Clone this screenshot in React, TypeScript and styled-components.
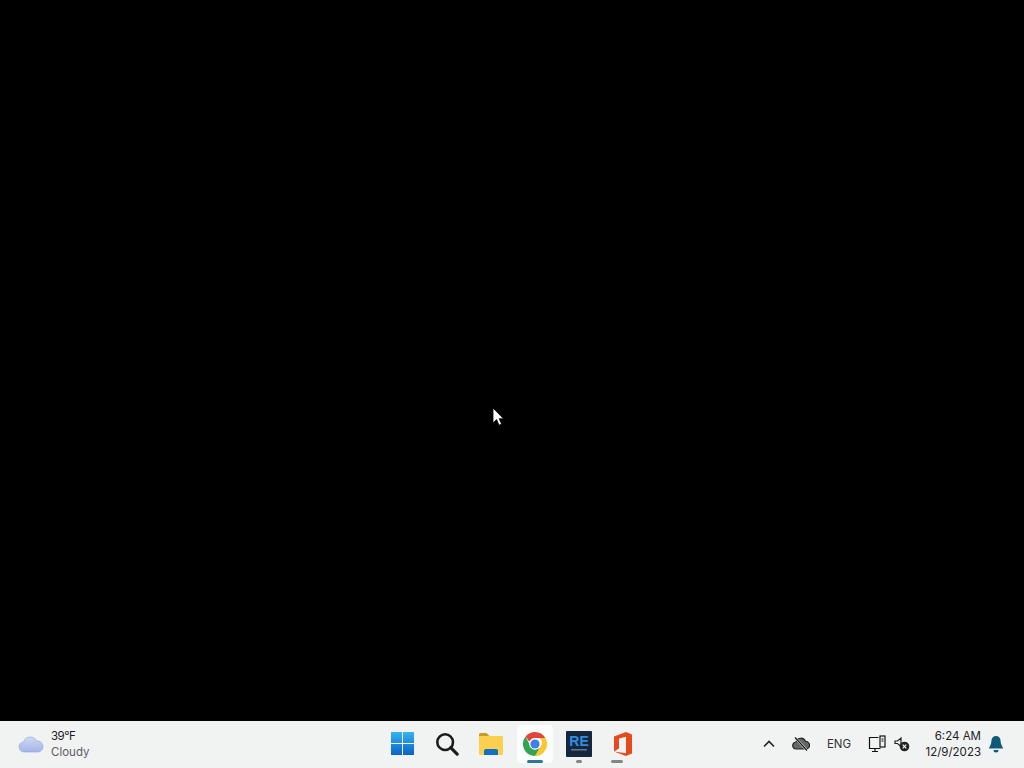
import { ReactNode } from "react";
import styled, { createGlobalStyle } from "styled-components";

const GlobalStyle = createGlobalStyle`
  html, body, #root {
    margin: 0;
    height: 100%;
  }

  body {
    font-family: "Inter", "Liberation Sans", sans-serif;
    overflow: hidden;
  }
`;

const Screen = styled.div`
  display: flex;
  flex-direction: column;
  height: 768px;
  background: #000;
`;

const Desktop = styled.div`
  flex: 1;
  position: relative;
`;

const Cursor = styled.svg`
  position: absolute;
  left: 492px;
  top: 407px;
`;

const Taskbar = styled.div`
  display: grid;
  grid-template-columns: 1fr auto 1fr;
  align-items: center;
  box-sizing: border-box;
  height: 47px;
  padding-bottom: 2px;
  background: #f1f3f3;
  color: #1a1a1a;
`;

const Weather = styled.div`
  display: flex;
  align-items: center;
  gap: 7px;
  padding-left: 18px;
  font-size: 11.5px;
  line-height: 16px;
`;

const WeatherText = styled.div`
  display: flex;
  flex-direction: column;
`;

const Temperature = styled.span`
  letter-spacing: -0.5px;
`;

const Condition = styled.span`
  color: #5c5c5c;
`;

const Apps = styled.div`
  display: flex;
  align-items: center;
  margin-left: 2px;
`;

const AppButton = styled.div<{ $active?: boolean }>`
  position: relative;
  display: flex;
  align-items: center;
  justify-content: center;
  width: ${(p) => (p.$active ? "36px" : "44px")};
  height: 38px;
  margin: ${(p) => (p.$active ? "0 4px" : "0")};
  border-radius: 4px;
  background: ${(p) => (p.$active ? "#fbfcfc" : "transparent")};
`;

const RunningMark = styled.div<{ $width: number; $shift: number; $active?: boolean }>`
  position: absolute;
  bottom: 0;
  left: calc(50% + ${(p) => p.$shift}px);
  transform: translateX(-50%);
  width: ${(p) => p.$width}px;
  height: 3px;
  border-radius: 2px;
  background: ${(p) => (p.$active ? "#2b7a94" : "#858585")};
`;

const Tray = styled.div`
  display: flex;
  align-items: center;
  justify-content: flex-end;
  padding-right: 13px;
  font-size: 11.5px;
`;

const TrayIcon = styled.div<{ $width: number }>`
  display: flex;
  align-items: center;
  justify-content: center;
  width: ${(p) => p.$width}px;
`;

const Lang = styled.span`
  width: 44px;
  margin-right: 3px;
  text-align: center;
  color: #333;
`;

const Clock = styled.div`
  display: flex;
  flex-direction: column;
  align-items: flex-end;
  width: 67px;
  line-height: 16px;
  color: #222;
`;

const StartSvg = styled.svg`
  margin-right: 2px;
`;

const StartIcon = () => (
  <StartSvg width="25" height="25" viewBox="0 0 26 26">
    <defs>
      <linearGradient id="startFill" x1="0" y1="0" x2="0" y2="1">
        <stop offset="0" stopColor="#35b4f0" />
        <stop offset="1" stopColor="#0a62c4" />
      </linearGradient>
    </defs>
    <path
      d="M1 1.500a.5.5 0 0 1 .5-.5H12.500v11.500H1zM13.500 1h11a.5.5 0 0 1 .5.5v11H13.500zM1 13.500h11.500V25H1.500a.5.5 0 0 1-.5-.5zM13.500 13.500H25v11a.5.5 0 0 1-.5.5H13.500z"
      fill="url(#startFill)"
    />
  </StartSvg>
);

const SearchIcon = () => (
  <svg width="24" height="24" viewBox="0 0 26 26" fill="none" stroke="#1c1c1c">
    <circle cx="11" cy="11" r="8.500" strokeWidth="2.800" />
    <path d="M17 17l7 7" strokeWidth="3.400" strokeLinecap="round" />
  </svg>
);

const FolderIcon = () => (
  <svg width="26" height="24" viewBox="0 0 26 24">
    <path d="M1 2.500A1.500 1.500 0 0 1 2.500 1H8.500l2.500 2.500V7H1z" fill="#c99a1e" />
    <rect x="1" y="4" width="24" height="19" rx="1" fill="#fbd04f" />
    <path d="M6 23v-4a2 2 0 0 1 2-2h10a2 2 0 0 1 2 2v4z" fill="#1270c4" />
  </svg>
);

const ChromeIcon = () => (
  <svg width="26" height="26" viewBox="0 0 26 26">
    <path d="M13 1a12 12 0 0 1 10.400 6H13a6 6 0 0 0-5.600 3.800L3.600 5.500A12 12 0 0 1 13 1z" fill="#e2463a" />
    <path d="M23.400 7A12 12 0 0 1 13 25l5.200-9a6 6 0 0 0-.5-9z" fill="#fbc62e" />
    <path d="M13 25A12 12 0 0 1 3.600 5.500L8.800 16a6 6 0 0 0 9.400 0z" fill="#33a352" />
    <circle cx="13" cy="13" r="5.800" fill="#fff" />
    <circle cx="13" cy="13" r="4.600" fill="#3f7fe8" />
  </svg>
);

const ReIcon = () => (
  <svg width="26" height="26" viewBox="0 0 26 26">
    <rect width="26" height="26" rx="1" fill="#16263c" />
    <text x="13" y="15" textAnchor="middle" fontSize="14" fontWeight="800" fontFamily="Liberation Sans, sans-serif" fill="#2f8fe0">
      RE
    </text>
    <rect x="5" y="18" width="16" height="1.500" fill="#5c7a99" />
  </svg>
);

const OfficeIcon = () => (
  <svg width="22" height="26" viewBox="0 0 22 26">
    <path d="M2 5.500L14 1l6 2.500v19L14 25 2 20.500l12 1.800V5.800L7 7.500v10l-5 3z" fill="#e8491c" />
  </svg>
);

const CloudIcon = () => (
  <svg width="26" height="20" viewBox="0 0 26 20">
    <defs>
      <linearGradient id="cloudFill" x1="0" y1="0" x2="0" y2="1">
        <stop offset="0" stopColor="#cfd9f2" />
        <stop offset="1" stopColor="#a3b5e8" />
      </linearGradient>
    </defs>
    <path
      d="M6 18a5 5 0 0 1-5-5 4.800 4.800 0 0 1 4.500-4.800A7 7 0 0 1 18.600 7 5.500 5.500 0 0 1 25 12.500 5.300 5.300 0 0 1 20 18z"
      fill="url(#cloudFill)"
      stroke="#8fa3da"
      strokeWidth="0.600"
    />
  </svg>
);

const apps: { icon: ReactNode; mark?: number; shift?: number; active?: boolean }[] = [
  { icon: <StartIcon /> },
  { icon: <SearchIcon /> },
  { icon: <FolderIcon /> },
  { icon: <ChromeIcon />, mark: 16, active: true },
  { icon: <ReIcon />, mark: 6 },
  { icon: <OfficeIcon />, mark: 12, shift: -6 },
];

const App = () => {
  return (
    <Screen>
      <GlobalStyle />
      <Desktop>
        <Cursor width="12" height="20" viewBox="0 0 12 20">
          <path d="M1 1v15l3.600-3.400 2.400 5.600 2.600-1.100-2.400-5.400H11.500z" fill="#fff" stroke="#000" strokeWidth="0.800" />
        </Cursor>
      </Desktop>
      <Taskbar>
        <Weather>
          <CloudIcon />
          <WeatherText>
            <Temperature>39°F</Temperature>
            <Condition>Cloudy</Condition>
          </WeatherText>
        </Weather>
        <Apps>
          {apps.map((app, i) => (
            <AppButton key={i} $active={app.active}>
              {app.icon}
              {app.mark && <RunningMark $width={app.mark} $shift={app.shift ?? 0} $active={app.active} />}
            </AppButton>
          ))}
        </Apps>
        <Tray>
          <TrayIcon $width={32}>
            <svg width="14" height="14" viewBox="0 0 14 14" fill="none" stroke="#222" strokeWidth="1.600">
              <path d="M2 9.500l5-5 5 5" />
            </svg>
          </TrayIcon>
          <TrayIcon $width={32}>
            <svg width="18" height="16" viewBox="0 0 18 16">
              <path d="M4.500 13a3.500 3.500 0 0 1-.5-7 5 5 0 0 1 9.500-.6A3.800 3.800 0 0 1 14 13z" fill="#666" stroke="#222" strokeWidth="1.200" />
              <path d="M3 1.500l12 13" stroke="#f1f3f3" strokeWidth="2.400" />
              <path d="M3 1.500l12 13" stroke="#111" strokeWidth="1.200" />
            </svg>
          </TrayIcon>
          <Lang>ENG</Lang>
          <TrayIcon $width={26}>
            <svg width="18" height="18" viewBox="0 0 18 18" fill="none" stroke="#111" strokeWidth="1.200">
              <path d="M10.500 2.500H1.500v11h11M7 13.500v3M4 16.500h6" />
              <rect x="12" y="1" width="5" height="11" />
              <path d="M13.500 4h2M13.500 6h2" />
            </svg>
          </TrayIcon>
          <TrayIcon $width={24}>
            <svg width="16" height="16" viewBox="0 0 16 16">
              <path d="M1 5h2.500L7 2v8.500L3.500 7.500H1z" fill="none" stroke="#222" strokeWidth="1.200" />
              <circle cx="10.500" cy="10.500" r="4.800" fill="#222" />
              <path d="M8.700 8.700l3.600 3.600M12.300 8.700l-3.600 3.600" stroke="#fff" strokeWidth="1.100" />
            </svg>
          </TrayIcon>
          <Clock>
            <span>6:24 AM</span>
            <span>12/9/2023</span>
          </Clock>
          <TrayIcon $width={30}>
            <svg width="16" height="18" viewBox="0 0 16 18">
              <path d="M8 1a4.500 4.500 0 0 1 4.500 4.500c0 4 2.500 6.500 2.500 8H1c0-1.500 2.500-4 2.500-8A4.500 4.500 0 0 1 8 1z" fill="#0f5a78" />
              <path d="M5.500 15a2.500 2.500 0 0 0 5 0z" fill="#0f5a78" />
            </svg>
          </TrayIcon>
        </Tray>
      </Taskbar>
    </Screen>
  );
};

export default App;
